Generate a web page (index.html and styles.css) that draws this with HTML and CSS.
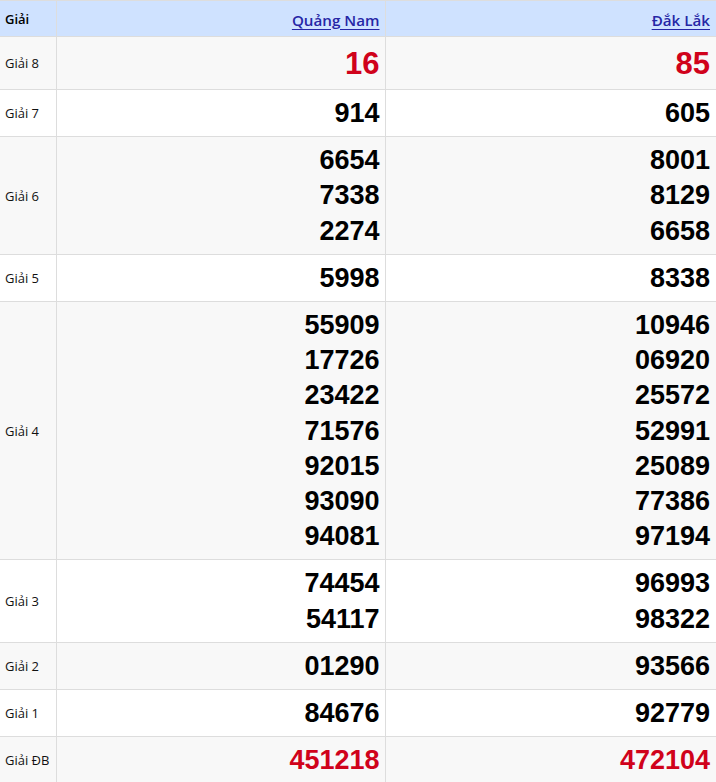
FILE: index.html
```html
<!DOCTYPE html>
<html lang="vi">
<head>
<meta charset="utf-8">
<title>Kết quả xổ số</title>
<link rel="stylesheet" href="styles.css">
</head>
<body>
<table class="kq">
  <colgroup>
    <col class="c-label">
    <col class="c-prov">
    <col class="c-prov2">
  </colgroup>
  <thead>
    <tr>
      <th class="lbl">Giải</th>
      <th class="prov"><a href="#">Quảng Nam</a></th>
      <th class="prov"><a href="#">Đắk Lắk</a></th>
    </tr>
  </thead>
  <tbody>
    <tr class="alt g8">
      <td class="lbl">Giải 8</td>
      <td class="num red">16</td>
      <td class="num red">85</td>
    </tr>
    <tr>
      <td class="lbl">Giải 7</td>
      <td class="num">914</td>
      <td class="num">605</td>
    </tr>
    <tr class="alt">
      <td class="lbl">Giải 6</td>
      <td class="num"><div>6654</div><div>7338</div><div>2274</div></td>
      <td class="num"><div>8001</div><div>8129</div><div>6658</div></td>
    </tr>
    <tr>
      <td class="lbl">Giải 5</td>
      <td class="num">5998</td>
      <td class="num">8338</td>
    </tr>
    <tr class="alt">
      <td class="lbl">Giải 4</td>
      <td class="num"><div>55909</div><div>17726</div><div>23422</div><div>71576</div><div>92015</div><div>93090</div><div>94081</div></td>
      <td class="num"><div>10946</div><div>06920</div><div>25572</div><div>52991</div><div>25089</div><div>77386</div><div>97194</div></td>
    </tr>
    <tr>
      <td class="lbl">Giải 3</td>
      <td class="num"><div>74454</div><div>54117</div></td>
      <td class="num"><div>96993</div><div>98322</div></td>
    </tr>
    <tr class="alt">
      <td class="lbl">Giải 2</td>
      <td class="num">01290</td>
      <td class="num">93566</td>
    </tr>
    <tr>
      <td class="lbl">Giải 1</td>
      <td class="num">84676</td>
      <td class="num">92779</td>
    </tr>
    <tr class="alt">
      <td class="lbl">Giải ĐB</td>
      <td class="num red">451218</td>
      <td class="num red">472104</td>
    </tr>
  </tbody>
</table>
</body>
</html>
```

FILE: styles.css
```css
html, body {
  margin: 0;
  padding: 0;
  background: #ffffff;
}

.kq {
  width: 717px;
  border-collapse: collapse;
  table-layout: fixed;
  font-family: "Open Sans", "Noto Sans", "DejaVu Sans", sans-serif;
}

.c-label { width: 56px; }
.c-prov { width: 329px; }

.kq th,
.kq td {
  border: 1px solid #dddddd;
  padding: 0 6px 0 5px;
}

.kq th:nth-child(2),
.kq td:nth-child(2) {
  padding-right: 5px;
}

.kq th:first-child,
.kq td:first-child {
  border-left: none;
}

.kq thead tr {
  background: #cfe2ff;
  height: 36px;
}

.kq th.lbl {
  text-align: left;
  font-size: 13px;
  font-weight: 600;
  color: #000;
}

.kq th.prov {
  text-align: right;
  font-size: 15.2px;
  font-weight: 600;
  padding-top: 2px;
}

.kq th.prov a {
  color: #2626a6;
  text-decoration: underline;
  text-underline-offset: 3px;
}

.kq tbody tr.alt {
  background: #f8f8f8;
}

.kq td.lbl {
  font-size: 13px;
  color: #111;
  white-space: nowrap;
  padding-left: 5px;
  padding-right: 0;
}

.kq td.num {
  text-align: right;
  font-family: "Liberation Sans", Arial, sans-serif;
  font-weight: 700;
  font-size: 27px;
  line-height: 35.2px;
  color: #000;
  padding-top: 6px;
  padding-bottom: 5px;
}

.kq tr.g8 td.num {
  font-size: 31px;
  line-height: 41px;
}

.kq td.red {
  color: #d0021b;
}
```
